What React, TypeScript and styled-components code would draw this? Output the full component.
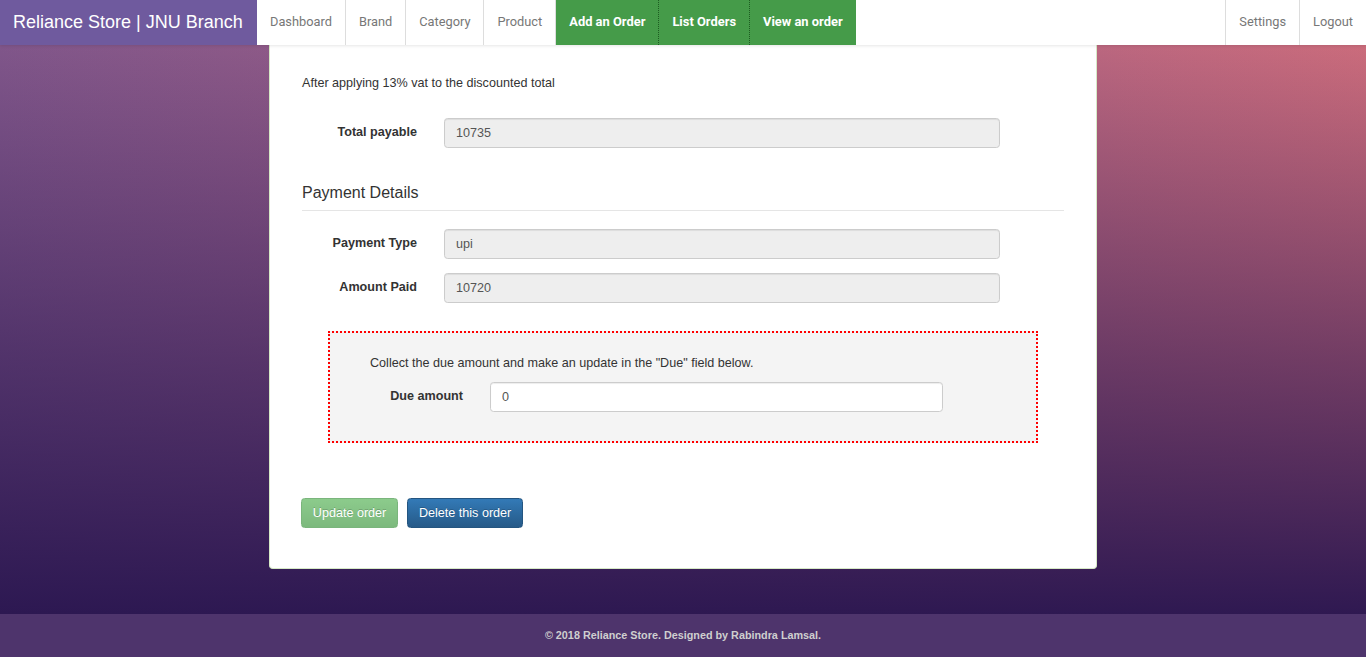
import React from 'react';
import styled, { createGlobalStyle } from 'styled-components';

const GlobalStyle = createGlobalStyle`
  html, body { margin: 0; padding: 0; }
  * { box-sizing: border-box; }
  body {
    font-family: "Liberation Sans", Arial, Helvetica, sans-serif;
    font-size: 12.6px;
    line-height: 1.42857;
    color: #333;
    background: #2a1650;
  }
`;

const Page = styled.div`
  display: flex;
  flex-direction: column;
  min-height: 100vh;
`;

const NavBar = styled.nav`
  display: flex;
  height: 45px;
  background: #fff;
  box-shadow: 0 1px 3px rgba(0, 0, 0, 0.1);
  position: relative;
  z-index: 2;
`;

const Brand = styled.a`
  display: flex;
  align-items: center;
  width: 257px;
  padding: 0 13px;
  background: #6f5a9e;
  color: #fff;
  font-family: "Liberation Sans", Arial, sans-serif;
  font-size: 18px;
  text-decoration: none;
  white-space: nowrap;
`;

const NavList = styled.ul<{ $right?: boolean }>`
  display: flex;
  list-style: none;
  margin: 0;
  padding: 0;
  margin-left: ${p => (p.$right ? 'auto' : '0')};
`;

type Kind = 'plain' | 'green' | 'greenSep' | 'right';

const NavItem = styled.li<{ $kind: Kind }>`
  display: flex;
  align-items: center;
  padding: 0 13px;
  font-family: Roboto, "Liberation Sans", Arial, sans-serif;
  font-size: ${p => (p.$kind === 'green' || p.$kind === 'greenSep' ? '12.9px' : '12.8px')};
  white-space: nowrap;
  color: ${p => (p.$kind === 'plain' || p.$kind === 'right' ? '#777' : '#fff')};
  font-weight: ${p => (p.$kind === 'green' || p.$kind === 'greenSep' ? 700 : 400)};
  background: ${p => (p.$kind === 'green' || p.$kind === 'greenSep' ? '#459b49' : '#fff')};
  border-right: ${p => (p.$kind === 'plain' ? '1px solid #ddd' : 'none')};
  border-left: ${p =>
    p.$kind === 'greenSep'
      ? '1px dotted #1d5c21'
      : p.$kind === 'right'
      ? '1px solid #ddd'
      : 'none'};
`;

const Main = styled.main`
  flex: 1;
  display: flex;
  justify-content: center;
  padding-bottom: 45px;
  background:
    linear-gradient(to bottom, rgba(42, 22, 80, 0) 0%, rgba(42, 22, 80, 0.55) 55%, rgba(42, 22, 80, 0.97) 100%),
    linear-gradient(to right, #80568a 0%, #a25f84 50%, #cb6c7c 100%);
`;

const Card = styled.section`
  width: 828px;
  background: #fff;
  border: 1px solid #d6e9c6;
  border-top: none;
  border-radius: 0 0 4px 4px;
  padding: 29px 32px 40px;
`;

const Note = styled.p`
  margin: 0;
  line-height: 18px;
`;

const FormRow = styled.div<{ $label: number; $field: number; $top: number }>`
  display: grid;
  grid-template-columns: ${p => p.$label}px ${p => p.$field}px;
  column-gap: 27px;
  align-items: center;
  margin-top: ${p => p.$top}px;
`;

const Label = styled.label`
  text-align: right;
  font-weight: 700;
  color: #333;
`;

const Input = styled.input<{ $readOnly?: boolean }>`
  height: 30px;
  width: 100%;
  padding: 0 11px;
  font-family: "Liberation Sans", Arial, sans-serif;
  font-size: 12.6px;
  color: #555;
  background: ${p => (p.$readOnly ? '#eee' : '#fff')};
  border: 1px solid #ccc;
  border-radius: 3.6px;
  box-shadow: inset 0 1px 1px rgba(0, 0, 0, 0.075);
  outline: none;
`;

const Legend = styled.div`
  margin-top: 31px;
  padding-bottom: 4px;
  font-size: 16px;
  line-height: 27px;
  color: #333;
  border-bottom: 1px solid #e5e5e5;
`;

const DueBox = styled.div`
  margin: 28px 26px 0;
  border: 2px dotted #ff0000;
  background: #f4f4f4;
  padding: 21px 40px 29px;
`;

const ButtonRow = styled.div`
  display: flex;
  gap: 9px;
  margin-top: 55px;
  margin-left: -1px;
`;

const Button = styled.button<{ $variant: 'success' | 'primary' }>`
  height: 30px;
  padding: 0 10.8px;
  font-family: "Liberation Sans", Arial, sans-serif;
  font-size: 12.6px;
  color: #fff;
  border-radius: 3.6px;
  text-shadow: 0 -1px 0 rgba(0, 0, 0, 0.2);
  cursor: pointer;
  background: ${p =>
    p.$variant === 'success'
      ? 'linear-gradient(to bottom, #8ccb8c 0%, #7cb97d 100%)'
      : 'linear-gradient(to bottom, #337ab7 0%, #265a88 100%)'};
  border: 1px solid ${p => (p.$variant === 'success' ? '#7ab57c' : '#245580')};
`;

const Footer = styled.footer`
  height: 43px;
  display: flex;
  align-items: center;
  justify-content: center;
  background: #4e346c;
  color: #cfcfcf;
  font-size: 10.8px;
  font-weight: 700;
`;

export default function App() {
  return (
    <>
      <GlobalStyle />
      <Page>
        <NavBar>
          <Brand href="#">Reliance Store | JNU Branch</Brand>
          <NavList>
            <NavItem $kind="plain">Dashboard</NavItem>
            <NavItem $kind="plain">Brand</NavItem>
            <NavItem $kind="plain">Category</NavItem>
            <NavItem $kind="plain">Product</NavItem>
            <NavItem $kind="green">Add an Order</NavItem>
            <NavItem $kind="greenSep">List Orders</NavItem>
            <NavItem $kind="greenSep">View an order</NavItem>
          </NavList>
          <NavList $right>
            <NavItem $kind="right">Settings</NavItem>
            <NavItem $kind="right">Logout</NavItem>
          </NavList>
        </NavBar>
        <Main>
          <Card>
            <Note>After applying 13% vat to the discounted total</Note>
            <FormRow $label={115} $field={556} $top={26}>
              <Label>Total payable</Label>
              <Input $readOnly readOnly value="10735" />
            </FormRow>
            <Legend>Payment Details</Legend>
            <FormRow $label={115} $field={556} $top={18}>
              <Label>Payment Type</Label>
              <Input $readOnly readOnly value="upi" />
            </FormRow>
            <FormRow $label={115} $field={556} $top={14}>
              <Label>Amount Paid</Label>
              <Input $readOnly readOnly value="10720" />
            </FormRow>
            <DueBox>
              <Note>Collect the due amount and make an update in the "Due" field below.</Note>
              <FormRow $label={93} $field={453} $top={10}>
                <Label>Due amount</Label>
                <Input defaultValue="0" />
              </FormRow>
            </DueBox>
            <ButtonRow>
              <Button $variant="success">Update order</Button>
              <Button $variant="primary">Delete this order</Button>
            </ButtonRow>
          </Card>
        </Main>
        <Footer>© 2018 Reliance Store. Designed by Rabindra Lamsal.</Footer>
      </Page>
    </>
  );
}
